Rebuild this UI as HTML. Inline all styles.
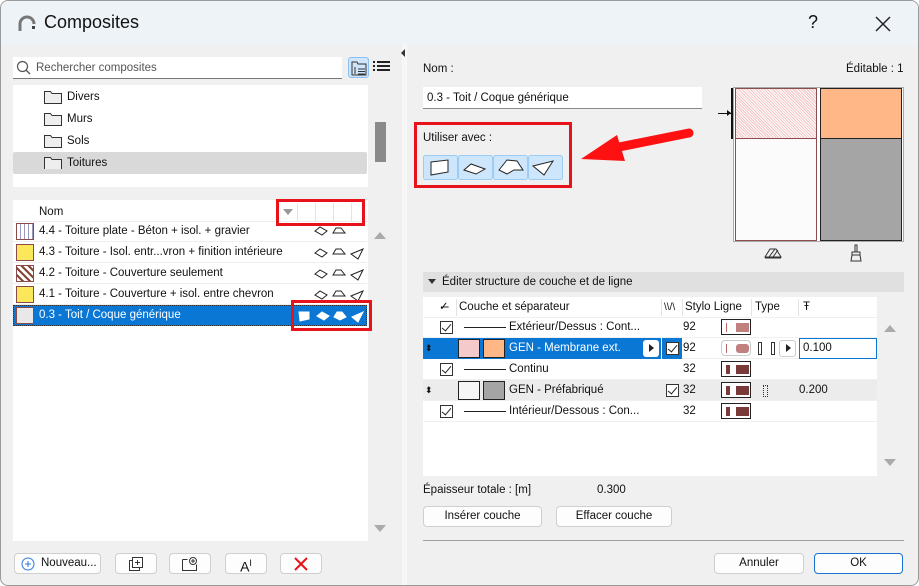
<!DOCTYPE html>
<html><head><meta charset="utf-8"><style>
*{box-sizing:border-box;margin:0;padding:0}
body{width:919px;height:586px;overflow:hidden;background:#fff;font-family:"Liberation Sans",sans-serif;font-size:11.5px;color:#111;position:relative}
.a{position:absolute}
.win{left:0;top:0;width:919px;height:586px;background:#f0f0f0;border:1px solid #9a9a9a;border-radius:8px;overflow:hidden}
.t{white-space:nowrap}
.btn{position:absolute;background:#fdfdfd;border:1px solid #cfcfcf;border-radius:4px;text-align:center;line-height:19px}
.row{position:absolute;left:12px;width:354px;height:21px;line-height:21px}
.sw{position:absolute;left:3px;top:2px;width:18px;height:17px;border:1px solid #8a4a4a}
.rr{border:3px solid #e8131a;position:absolute}
.tr{position:absolute;left:422px;width:454px;height:21px;line-height:21px;border-bottom:1px solid #f0f0f0}
.cb{position:absolute;width:13px;height:13px;border:1px solid #333;background:#fff;top:4px}
.cb:after{content:"";position:absolute;left:3px;top:0px;width:4px;height:8px;border:solid #222;border-width:0 1.5px 1.5px 0;transform:rotate(40deg)}
.pen{position:absolute;left:298px;top:2px;width:30px;height:16px;border:1px solid #222;background:#fff}
</style></head><body>
<div class="a win">
<div class="a" style="left:0;top:0;width:919px;height:44px;background:#eef3f8"></div>
<svg class="a" style="left:15px;top:11px" width="22" height="22"><path d="M4 19 V12 A7 7 0 0 1 18 12" stroke="#777" stroke-width="3" fill="none"/><rect x="16" y="14" width="3" height="3" fill="#444"/></svg>
<div class="a t" style="left:43px;top:11px;font-size:18px">Composites</div>
<div class="a t" style="left:807px;top:11px;font-size:18px">?</div>
<svg class="a" style="left:873px;top:14px" width="18" height="18"><path d="M2 2L16 16M16 2L2 16" stroke="#222" stroke-width="1.5"/></svg>

<div class="a" style="left:12px;top:56px;width:329px;height:22px;background:#fff;border-bottom:1px solid #777"></div>
<svg class="a" style="left:15px;top:59px" width="16" height="16"><circle cx="6.5" cy="6.5" r="5" stroke="#555" fill="none" stroke-width="1.2"/><path d="M10 10L14 14" stroke="#555" stroke-width="1.3"/></svg>
<div class="a t" style="left:35px;top:61px;color:#555">Rechercher composites</div>
<div class="a" style="left:347px;top:56px;width:21px;height:21px;background:#cfe5fb;border:1px solid #8cc0f0;border-radius:3px"></div>
<svg class="a" style="left:349px;top:58px" width="18" height="18"><path d="M2 3h5l1 2h8v11H2z" fill="none" stroke="#333"/><path d="M8 10h7M8 12.5h7M8 15h7M5 8v7" stroke="#333"/></svg>
<svg class="a" style="left:372px;top:59px" width="17" height="14"><path d="M0 2h2M4 2h13M0 6h2M4 6h13M0 10h2M4 10h13" stroke="#222" stroke-width="2"/></svg>

<div class="a" style="left:12px;top:84px;width:355px;height:102px;background:#fff"></div>
<div class="a" style="left:12px;top:151px;width:354px;height:22px;background:#d9d9d9;border-radius:2px"></div>
<div class="a" style="left:374px;top:121px;width:11px;height:40px;background:#8a8a8a"></div>
<div class="a t" style="left:66px;top:90px">Divers</div>
<div class="a t" style="left:66px;top:112px">Murs</div>
<div class="a t" style="left:66px;top:134px">Sols</div>
<div class="a t" style="left:66px;top:156px">Toitures</div>
<svg class="a" style="left:43px;top:88px" width="18" height="80"><g fill="#eee" stroke="#333"><path d="M0.5 2.5h6l1.5 2h9.5v10H0.5z"/><path d="M0.5 24.5h6l1.5 2h9.5v10H0.5z"/><path d="M0.5 46.5h6l1.5 2h9.5v10H0.5z"/><path d="M0.5 68.5h6l1.5 2h9.5v10H0.5z"/></g></svg>

<div class="a" style="left:12px;top:199px;width:355px;height:341px;background:#fff"></div>
<div class="a" style="left:12px;top:199px;width:355px;height:22px;border-bottom:1px solid #eee"></div>
<div class="a t" style="left:38px;top:205px">Nom</div>
<div class="a" style="left:282px;top:208px;border:5px solid transparent;border-top:6px solid #999"></div>
<div class="a" style="left:296px;top:202px;width:1px;height:18px;background:#e3e3e3"></div>
<div class="a" style="left:314px;top:202px;width:1px;height:18px;background:#e3e3e3"></div>
<div class="a" style="left:332px;top:202px;width:1px;height:18px;background:#e3e3e3"></div>
<div class="a" style="left:350px;top:202px;width:1px;height:18px;background:#e3e3e3"></div>

<div class="row" style="top:220px;border-bottom:1px solid #eee"><div class="sw" style="background:repeating-linear-gradient(90deg,#fff 0 3px,#99b 3px 4px)"></div><span class="a t" style="left:26px">4.4 - Toiture plate - Béton + isol. + gravier</span></div>
<div class="row" style="top:241px;border-bottom:1px solid #eee"><div class="sw" style="background:#fce65a"></div><span class="a t" style="left:26px">4.3 - Toiture - Isol. entr...vron + finition intérieure</span></div>
<div class="row" style="top:262px;border-bottom:1px solid #eee"><div class="sw" style="background:repeating-linear-gradient(45deg,#fff 0 3px,#843 3px 5px)"></div><span class="a t" style="left:26px">4.2 - Toiture - Couverture seulement</span></div>
<div class="row" style="top:283px;border-bottom:1px solid #eee"><div class="sw" style="background:#fce65a"></div><span class="a t" style="left:26px">4.1 - Toiture - Couverture + isol. entre chevron</span></div>
<div class="row" style="top:304px;background:#0a77d5;color:#fff;outline:1px dotted #333;outline-offset:-1px"><div class="sw" style="background:#e8e8e8"></div><span class="a t" style="left:26px">0.3 - Toit / Coque générique</span></div>
<svg class="a" style="left:312px;top:223px" width="52" height="100"><g stroke="#222" fill="#fff" stroke-width="1"><path d="M2 7l5-4 7 4-5 4z"/><path d="M20 9l3-5h5l4 5z"/><path d="M2 29l5-4 7 4-5 4z"/><path d="M20 30l3-5h5l4 5z"/><path d="M38 30l12-5-5 10z"/><path d="M2 50l5-4 7 4-5 4z"/><path d="M20 51l3-5h5l4 5z"/><path d="M38 51l12-5-5 10z"/><path d="M2 71l5-4 7 4-5 4z"/><path d="M20 72l3-5h5l4 5z"/><path d="M38 72l12-5-5 10z"/></g></svg>
<svg class="a" style="left:296px;top:307px" width="68" height="16"><g stroke="#fff" fill="#fff"><path d="M2 4h10v7l-9 2z"/><path d="M20 8l5-4 7 4-5 4z"/><path d="M37 9l3-5h5l4 5-6 3z"/><path d="M55 9l11-5-5 10z"/></g></svg>
<div class="rr" style="left:275px;top:198px;width:89px;height:27px"></div>
<div class="rr" style="left:290px;top:299px;width:81px;height:31px"></div>
<div class="a" style="left:373px;top:231px;border:6px solid transparent;border-bottom:7px solid #aaa;border-top:0"></div>
<div class="a" style="left:373px;top:524px;border:6px solid transparent;border-top:7px solid #aaa;border-bottom:0"></div>

<div class="btn" style="left:13px;top:552px;width:87px;height:21px;text-align:left;padding-left:26px">Nouveau...</div>
<svg class="a" style="left:20px;top:556px" width="14" height="14"><circle cx="7" cy="7" r="6" stroke="#2b7be0" fill="none"/><path d="M7 4v6M4 7h6" stroke="#2b7be0"/></svg>
<div class="btn" style="left:114px;top:552px;width:42px;height:21px"><svg width="16" height="16" style="margin-top:2px"><rect x="1.5" y="4.5" width="10" height="10" fill="#fff" stroke="#333"/><rect x="4.5" y="1.5" width="10" height="10" fill="#fff" stroke="#333"/><path d="M9.5 4v5M7 6.5h5" stroke="#333"/></svg></div>
<div class="btn" style="left:168px;top:552px;width:42px;height:21px"><svg width="18" height="16" style="margin-top:2px"><path d="M1.5 3.5v11h14v-6M1.5 3.5h5" fill="none" stroke="#333"/><circle cx="12" cy="5" r="3.5" fill="#fff" stroke="#333"/><path d="M12 3v4M10 5h4" stroke="#333"/></svg></div>
<div class="btn" style="left:224px;top:552px;width:42px;height:21px;font-size:14px">A<sup style="font-size:9px">I</sup></div>
<div class="btn" style="left:279px;top:552px;width:42px;height:21px"><svg width="14" height="14" style="margin-top:3px"><path d="M1 1L13 13M13 1L1 13" stroke="#e8131a" stroke-width="2"/></svg></div>

<div class="a" style="left:401px;top:44px;width:5px;height:542px;background:#f7f7f7"></div>
<div class="a" style="left:400px;top:48px;border:4px solid transparent;border-right:4px solid #333;border-left:0"></div>

<div class="a t" style="left:422px;top:62px">Nom :</div>
<div class="a t" style="left:845px;top:62px">Éditable : 1</div>
<div class="a" style="left:422px;top:86px;width:279px;height:22px;background:#fff;border-bottom:1px solid #888"></div>
<div class="a t" style="left:426px;top:91px">0.3 - Toit / Coque générique</div>
<div class="rr" style="left:413px;top:121px;width:158px;height:66px"></div>
<div class="a t" style="left:422px;top:131px">Utiliser avec :</div>
<svg class="a" style="left:422px;top:154px" width="142" height="26"><g fill="#cde6fb" stroke="#9cccf2"><rect x="0.5" y="0.5" width="34" height="24" rx="2"/><rect x="35.5" y="0.5" width="34" height="24" rx="2"/><rect x="70.5" y="0.5" width="34" height="24" rx="2"/><rect x="105.5" y="0.5" width="34" height="24" rx="2"/></g><g fill="#fff" stroke="#222"><path d="M8 7l17-2v12L8 20z"/><path d="M41 15l7-6 14 5-9 5z"/><path d="M76 15l8-10 10 1 6 9h-9l-7 4z"/><path d="M110 11l20-5-9 14z"/></g></svg>
<svg class="a" style="left:578px;top:126px" width="115" height="40"><path d="M110 6L30 22" stroke="#f11" stroke-width="9" stroke-linecap="round"/><path d="M2 32L38 8 46 34z" fill="#f11"/></svg>

<div class="a" style="left:732px;top:86px;width:171px;height:155px;background:#fff;border:1px solid #aaa"></div>
<div class="a" style="left:734px;top:87px;width:82px;height:51px;background:repeating-linear-gradient(45deg,#f2c4c4 0 1px,#fff 1px 2px),#f0c0c0;border:1px solid #8b4d4d"></div>
<div class="a" style="left:734px;top:137px;width:82px;height:103px;background:#fbfbfb;border:1px solid #8b4d4d"></div>
<div class="a" style="left:819px;top:87px;width:82px;height:51px;background:#ffb787;border:1px solid #222"></div>
<div class="a" style="left:819px;top:137px;width:82px;height:103px;background:#a5a5a5;border:1px solid #222"></div>
<div class="a" style="left:730px;top:87px;width:2px;height:51px;background:#111"></div>
<div class="a" style="left:717px;top:112px;width:13px;height:1px;background:#111"></div>
<div class="a" style="left:726px;top:109px;border:3px solid transparent;border-left:4px solid #111;border-right:0"></div>
<svg class="a" style="left:763px;top:245px" width="18" height="14"><path d="M1 11l5-8h6l5 8z" fill="none" stroke="#333"/><path d="M5 11l6-8M9 11l5-7" stroke="#333"/><path d="M1 12h16" stroke="#333"/></svg>
<svg class="a" style="left:848px;top:243px" width="14" height="18"><path d="M6 1h2v7H6z" fill="none" stroke="#333"/><path d="M3 8h8v3H3zM3 11l-1 6h10l-1-6" fill="none" stroke="#333"/></svg>

<div class="a" style="left:422px;top:271px;width:481px;height:20px;background:#e0e0e0"></div>
<div class="a" style="left:427px;top:278px;border:4px solid transparent;border-top:5px solid #333;border-bottom:0"></div>
<div class="a t" style="left:441px;top:275px">Éditer structure de couche et de ligne</div>

<div class="a" style="left:422px;top:296px;width:454px;height:179px;background:#fff"></div>
<div class="tr" style="top:296px"><span class="a t" style="left:16px">✓̶</span><span class="a t" style="left:36px">Couche et séparateur</span><span class="a t" style="left:241px;font-size:10px">\\/\</span><span class="a t" style="left:262px">Stylo Ligne</span><span class="a t" style="left:332px">Type</span><span class="a t" style="left:380px">Ŧ</span></div>
<div class="a" style="left:455px;top:298px;width:1px;height:17px;background:#e3e3e3"></div>
<div class="a" style="left:660px;top:298px;width:1px;height:17px;background:#e3e3e3"></div>
<div class="a" style="left:681px;top:298px;width:1px;height:17px;background:#e3e3e3"></div>
<div class="a" style="left:750px;top:298px;width:1px;height:17px;background:#e3e3e3"></div>
<div class="a" style="left:797px;top:298px;width:1px;height:17px;background:#e3e3e3"></div>

<div class="tr" style="top:316px"><div class="cb" style="left:17px"></div><div class="a" style="left:41px;top:10px;width:42px;height:1px;background:#222"></div><span class="a t" style="left:86px">Extérieur/Dessus : Cont...</span><span class="a t" style="left:260px">92</span><div class="pen"><div class="a" style="left:4px;top:3px;width:1px;height:9px;background:#b66"></div><div class="a" style="left:14px;top:3px;width:13px;height:9px;background:#c08080"></div></div></div>
<div class="tr" style="top:337px;background:#fff"><div class="a" style="left:0;top:0;width:238px;height:21px;background:#0a77d5"></div><div class="a" style="left:239px;top:0;width:20px;height:21px;background:#0a77d5"></div><div class="a" style="left:376px;top:0;width:78px;height:21px;border:1px solid #0a77d5"></div><span class="a t" style="left:2px;color:#111;font-size:9px">⬍</span><div class="a" style="left:35px;top:1px;width:22px;height:19px;background:#f4caca;border:1px solid #222"></div><div class="a" style="left:60px;top:1px;width:22px;height:19px;background:#ffb787;border:1px solid #222"></div><span class="a t" style="left:86px;color:#fff">GEN - Membrane ext.</span><div class="a" style="left:220px;top:2px;width:16px;height:17px;background:#fff;border-radius:3px"></div><div class="a" style="left:226px;top:6px;border:4px solid transparent;border-left:5px solid #222;border-right:0"></div><div class="cb" style="left:243px"></div><span class="a t" style="left:260px">92</span><div class="pen" style="border-color:#ccc;border-radius:4px"><div class="a" style="left:4px;top:3px;width:1px;height:9px;background:#b66"></div><div class="a" style="left:14px;top:3px;width:13px;height:9px;background:#c08080;border-radius:3px"></div></div><div class="a" style="left:335px;top:4px;width:4px;height:13px;border:1px solid #333"></div><div class="a" style="left:348px;top:4px;width:4px;height:13px;border:1px solid #333"></div><div class="a" style="left:356px;top:2px;width:17px;height:17px;border:1px solid #ccc;border-radius:3px"></div><div class="a" style="left:363px;top:6px;border:4px solid transparent;border-left:5px solid #222;border-right:0"></div><span class="a t" style="left:380px">0.100</span></div>
<div class="tr" style="top:358px"><div class="cb" style="left:17px"></div><div class="a" style="left:41px;top:10px;width:42px;height:1px;background:#222"></div><span class="a t" style="left:86px">Continu</span><span class="a t" style="left:260px">32</span><div class="pen"><div class="a" style="left:4px;top:3px;width:4px;height:9px;background:#7a3a3a"></div><div class="a" style="left:14px;top:3px;width:13px;height:9px;background:#7a3a3a"></div></div></div>
<div class="tr" style="top:379px;background:#ececec"><span class="a t" style="left:2px;font-size:9px">⬍</span><div class="a" style="left:35px;top:1px;width:22px;height:19px;background:#f6f6f6;border:1px solid #222"></div><div class="a" style="left:60px;top:1px;width:22px;height:19px;background:#a5a5a5;border:1px solid #222"></div><span class="a t" style="left:86px">GEN - Préfabriqué</span><div class="cb" style="left:243px"></div><span class="a t" style="left:260px">32</span><div class="pen"><div class="a" style="left:4px;top:3px;width:4px;height:9px;background:#7a3a3a"></div><div class="a" style="left:14px;top:3px;width:13px;height:9px;background:#7a3a3a"></div></div><div class="a" style="left:340px;top:5px;width:5px;height:12px;border:1px dotted #333"></div><span class="a t" style="left:376px">0.200</span></div>
<div class="tr" style="top:400px"><div class="cb" style="left:17px"></div><div class="a" style="left:41px;top:10px;width:42px;height:1px;background:#222"></div><span class="a t" style="left:86px">Intérieur/Dessous : Con...</span><span class="a t" style="left:260px">32</span><div class="pen"><div class="a" style="left:4px;top:3px;width:4px;height:9px;background:#7a3a3a"></div><div class="a" style="left:14px;top:3px;width:13px;height:9px;background:#7a3a3a"></div></div></div>
<div class="a" style="left:883px;top:324px;border:6px solid transparent;border-bottom:7px solid #aaa;border-top:0"></div>
<div class="a" style="left:883px;top:458px;border:6px solid transparent;border-top:7px solid #aaa;border-bottom:0"></div>

<div class="a t" style="left:422px;top:483px">Épaisseur totale : [m]</div>
<div class="a t" style="left:596px;top:483px">0.300</div>
<div class="btn" style="left:422px;top:505px;width:119px;height:21px">Insérer couche</div>
<div class="btn" style="left:555px;top:505px;width:116px;height:21px">Effacer couche</div>
<div class="a" style="left:422px;top:539px;width:481px;height:1px;background:#a0a0a0"></div>
<div class="btn" style="left:713px;top:552px;width:90px;height:21px">Annuler</div>
<div class="btn" style="left:813px;top:552px;width:89px;height:21px;border-color:#1a73d0">OK</div>
</div>
</body></html>
